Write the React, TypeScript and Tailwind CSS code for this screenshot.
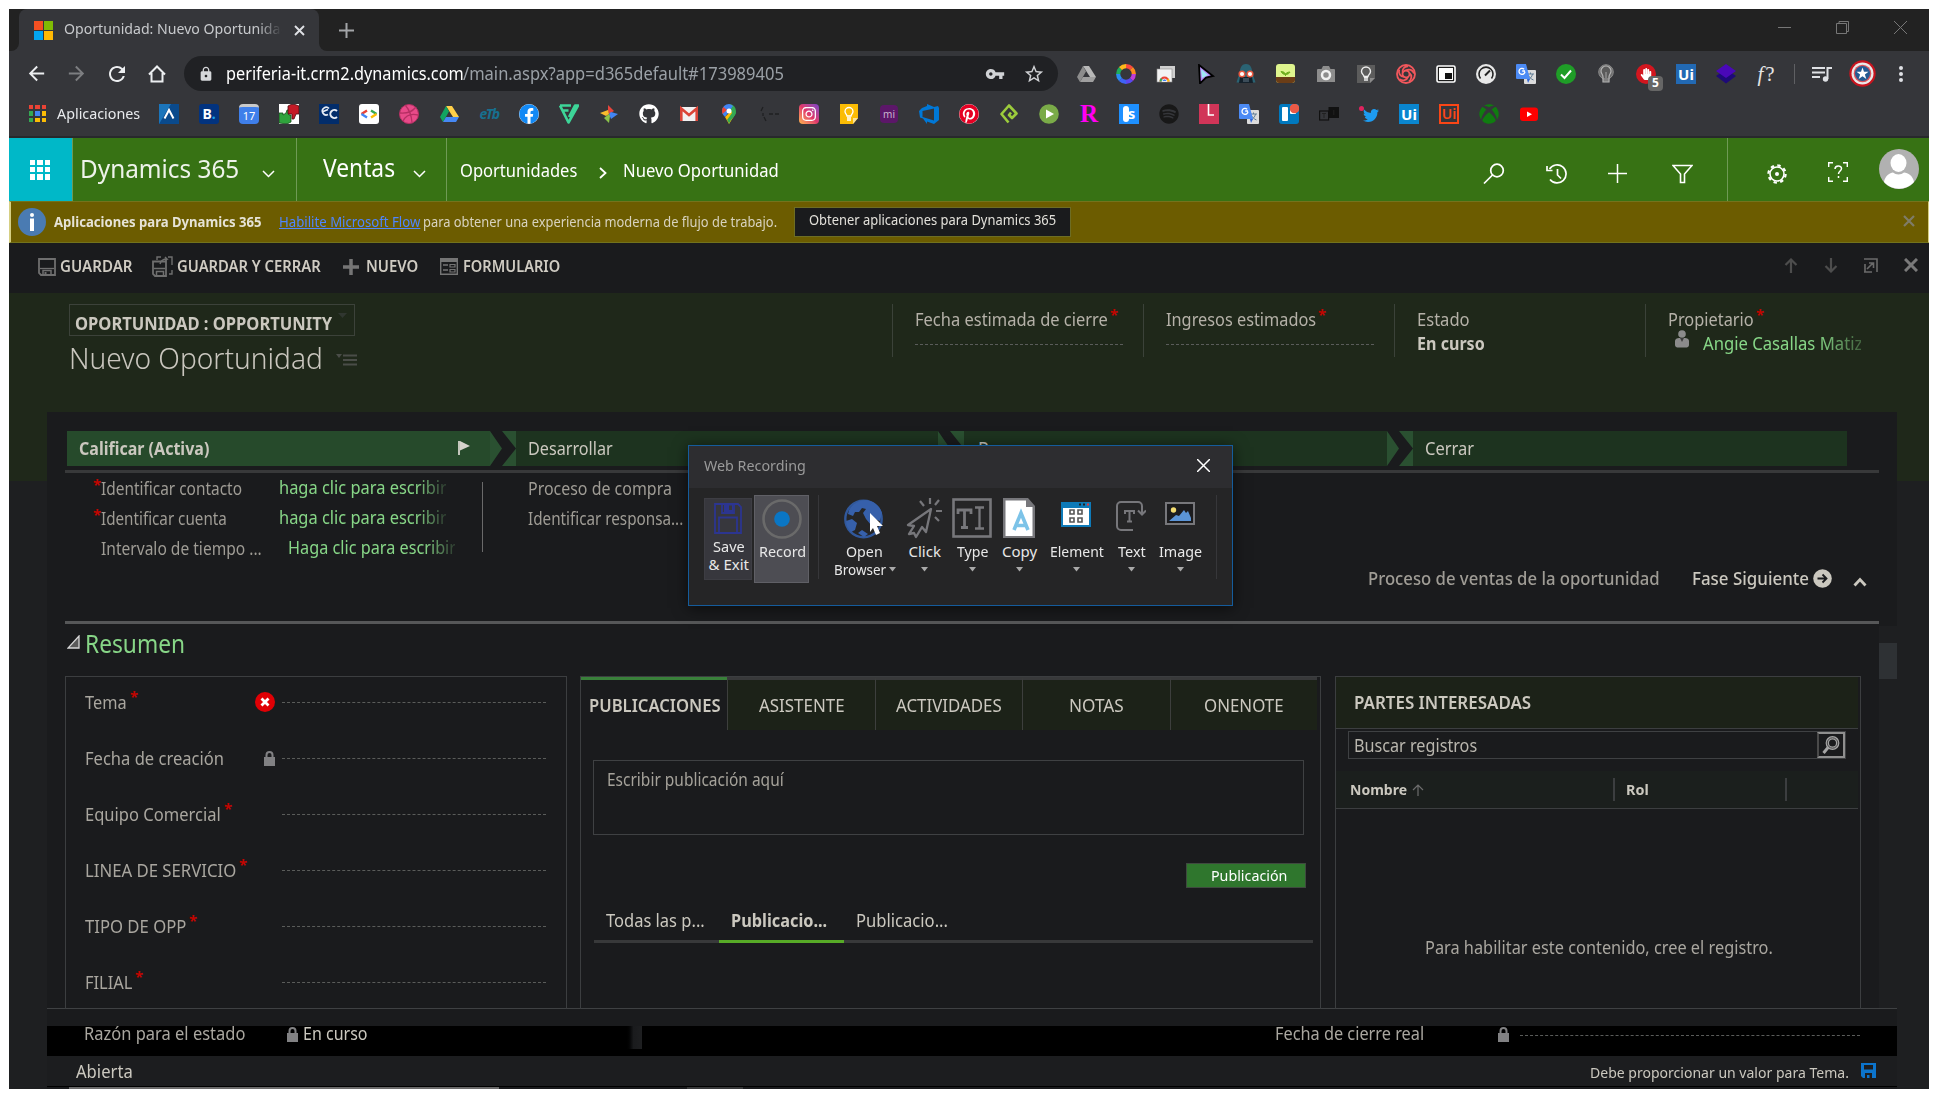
import React, { useLayoutEffect, useRef, useState } from "react";
import {
  FaFacebook,
  FaGithub,
  FaInstagram,
  FaPinterest,
  FaSpotify,
  FaTwitter,
  FaXbox,
  FaHandPaper,
} from "react-icons/fa";
import { MdVpnKey, MdStarBorder, MdLock, MdArrowBack, MdArrowForward, MdRefresh } from "react-icons/md";

/* A single line of text fitted to a fixed column width. */
function T({ w, c = "", children }: { w: number; c?: string; children: React.ReactNode }) {
  const ref = useRef<HTMLSpanElement>(null);
  const [scale, setScale] = useState(1);
  useLayoutEffect(() => {
    if (ref.current) setScale((w + 1) / ref.current.offsetWidth);
  }, [w]);
  return (
    <span className={`block shrink-0 ${c}`} style={{ width: w }}>
      <span
        ref={ref}
        className="inline-block origin-left whitespace-nowrap"
        style={{ transform: `scaleX(${scale})` }}
      >
        {children}
      </span>
    </span>
  );
}

type SvgProps = { w?: number; h?: number; vb?: string; c?: string; children: React.ReactNode };
function Svg({ w = 20, h = 20, vb = "0 0 20 20", c = "", children }: SvgProps) {
  return (
    <svg width={w} height={h} viewBox={vb} fill="none" className={`block shrink-0 ${c}`}>
      {children}
    </svg>
  );
}

/* ---------- browser icons ---------- */

const Translate = () => (
  <Svg>
    <rect x="8" y="6" width="12" height="14" rx="1" fill="#dcdcdc" />
    <path d="M11 10h7M14.500 8.500V10M16.500 10c-.5 3-2.500 5-5 6M12.500 11.500c1 2 2.500 3.500 5 4.500" stroke="#5f7d95" strokeWidth="1" />
    <path d="M1 0h9l4 15H1a1 1 0 0 1-1-1V1a1 1 0 0 1 1-1z" fill="#4c8bf5" />
    <path d="M11 15h3l-2 4z" fill="#3367d6" />
    <path d="M9 7H6.200M8.100 5.200A3 3 0 1 0 9 7.600" stroke="#fff" strokeWidth="1.300" />
  </Svg>
);

const Drive = ({ gray = false }: { gray?: boolean }) => (
  <Svg>
    <path d="M7 2h6l7 11h-6z" fill={gray ? "#b8b8b8" : "#ffcf48"} />
    <path d="M7 2l3 5.500L4 18 1 13z" fill={gray ? "#8c8c8c" : "#11a461"} />
    <path d="M7 13h13l-3 5H4z" fill={gray ? "#9f9f9f" : "#4688f4"} />
  </Svg>
);

const UiBox = ({ kind }: { kind: "a" | "b" | "c" }) => (
  <span
    className={
      kind === "a"
        ? "flex size-5 items-center justify-center bg-[#2269b3] text-[15px] font-bold leading-5 text-white"
        : kind === "b"
          ? "flex size-5 items-center justify-center bg-[#0a86cf] text-[15px] font-bold leading-5 text-white"
          : "flex size-5 items-center justify-center border-2 border-[#fa4616] text-[14px] font-semibold leading-4 text-[#fa4616]"
    }
  >
    Ui
  </span>
);

const extensions: React.ReactNode[] = [
  <Drive gray />,
  <Svg>
    {["#f9483f", "#ff8a1f", "#c13bd8", "#5b47f0", "#3f63f5", "#2a8cf0", "#1fae5c", "#ffb81c"].map((c, i) => (
      <path key={c} d="M10 2.200A7.800 7.800 0 0 1 15.600 4.500" stroke={c} strokeWidth="4.200" transform={`rotate(${i * 45} 10 10)`} />
    ))}
  </Svg>,
  <Svg>
    <rect x="4" y="2" width="15" height="12" fill="#cfcfcf" />
    <rect x="1" y="5" width="15" height="13" fill="#f3f3f3" stroke="#8a8a8a" strokeWidth=".6" />
    <path d="M3.500 17.500a5 5 0 0 1 10 0z" fill="#ea4335" />
    <path d="M3.500 17.500a5 5 0 0 1 1.500-3.500l3 3.500z" fill="#34a853" />
    <path d="M13.500 17.500a5 5 0 0 0-1-3l-3 3z" fill="#fbbc05" />
    <path d="M6 17.500a2.500 2.500 0 0 1 5 0z" fill="#4285f4" stroke="#fff" strokeWidth=".8" />
  </Svg>,
  <Svg>
    <path d="M3 1l14 11-7 1.500-6 6z" fill="#b78af5" stroke="#000" strokeWidth="1.800" />
    <path d="M5 5l7 6-6 3z" fill="#9fe8f5" />
  </Svg>,
  <Svg>
    <path d="M10 0c5 0 6 5 6.500 9l3 9.500H.500L3.500 9C4 5 5 0 10 0z" fill="#2a6373" />
    <path d="M4 13h12l1 6H3z" fill="#14212b" />
    <path d="M8 14v4M10 14v4M12 14v4" stroke="#7790a0" strokeWidth=".8" />
    <circle cx="6" cy="10" r="2.800" fill="#fff" stroke="#e8573f" strokeWidth="1.500" />
    <circle cx="14" cy="10" r="2.800" fill="#fff" stroke="#e8573f" strokeWidth="1.500" />
  </Svg>,
  <Svg>
    <rect y="0" width="19" height="19" rx="3" fill="#dff58e" />
    <path d="M0 13h19v3a3 3 0 0 1-3 3H3a3 3 0 0 1-3-3z" fill="#6b3d16" />
    <path d="M9.500 12V9.500M9.500 10.500C7.500 10.500 6 9.500 5 7.500 7.500 7.500 9 8.500 9.500 10.500zM9.500 10.500c.5-1.500 2-2.500 4.500-2.500-.5 1.500-2.500 2.500-4.500 2.500z" fill="#6fae1e" stroke="#6fae1e" />
  </Svg>,
  <Svg>
    <path d="M7 2h6l1.500 3H18a1 1 0 0 1 1 1v12H1V6a1 1 0 0 1 1-1h3.500z" fill="#8d8d8d" />
    <circle cx="10" cy="11" r="4" fill="#8d8d8d" stroke="#f1f1f1" strokeWidth="2.500" />
  </Svg>,
  <Svg>
    <path d="M1 1h18v13l-5 5H1z" fill="#5c5c5c" />
    <path d="M14 19v-5h5z" fill="#8b8b8b" />
    <path d="M8 14h4M8 16h4M8 12.500c0-1.500-2.500-2.500-2.500-5a4.500 4.500 0 0 1 9 0c0 2.500-2.500 3.500-2.500 5z" stroke="#eee" strokeWidth="1.400" />
  </Svg>,
  <Svg>
    <circle cx="10" cy="10" r="9" stroke="#f2575c" strokeWidth="1.800" />
    {[0, 72, 144, 216, 288].map((a) => (
      <path key={a} d="M10 6.500c3-2 7-.5 8 3" stroke="#f2575c" strokeWidth="1.800" transform={`rotate(${a} 10 10)`} />
    ))}
    <circle cx="10" cy="10" r="3.500" stroke="#f2575c" strokeWidth="1.800" />
  </Svg>,
  <Svg>
    <rect x="1" y="2" width="18" height="16" rx="1.500" fill="#1c1c1c" stroke="#fff" strokeWidth="1.600" />
    <rect x="3" y="4" width="14" height="12" fill="#fff" />
    <rect x="9" y="9" width="7" height="6" fill="#111" />
  </Svg>,
  <Svg>
    <circle cx="10" cy="10" r="10" fill="#e8e8e8" />
    <path d="M4.500 14.500a7 7 0 1 1 11 0" stroke="#222" strokeWidth="1.600" />
    <path d="M9 11.500l5-5" stroke="#222" strokeWidth="2" />
  </Svg>,
  <Translate />,
  <Svg>
    <circle cx="10" cy="10" r="10" fill="#1f9d27" />
    <path d="M5 10.500l3.500 3.500L15 6.500" stroke="#fff" strokeWidth="2" />
  </Svg>,
  <Svg>
    <circle cx="10" cy="8" r="7.300" fill="#6d6d6d" stroke="#8a8a8a" />
    <path d="M7 13c0-3-2-3-2-6a5 5 0 0 1 10 0c0 3-2 3-2 6v5H7z" fill="#5a5a5a" stroke="#b5b5b5" strokeWidth="1.200" />
    <path d="M10 14V8M7 15h6M7 17h6" stroke="#a5a5a5" />
  </Svg>,
  <span className="relative flex size-5 items-center justify-center rounded-full bg-[#d3161f]">
    <FaHandPaper className="size-[12px] text-white" />
    <span className="absolute left-[12px] top-[12px] flex h-[15px] w-[15px] items-center justify-center rounded-sm bg-[#666] text-[12px] font-bold leading-none text-white">
      5
    </span>
  </span>,
  <UiBox kind="a" />,
  <Svg>
    <path d="M10 5l10 7-10 7.500L0 12z" fill="#1e0a78" />
    <path d="M10 0l10 7-10 7L0 7z" fill="#4a08b8" />
  </Svg>,
  <span className="w-5 whitespace-nowrap text-center font-['Liberation_Serif',serif] text-[21px] italic leading-5 text-[#e4e4e4]">
    f<span className="ml-0.5 not-italic">?</span>
  </span>,
];

const bookmarks: React.ReactNode[] = [
  <Svg>
    <rect width="20" height="20" fill="#0a4a8c" />
    <path d="M0 0h12L0 20z" fill="#1b75bb" />
    <path d="M5.500 14.500L10 6l4.500 8.500" stroke="#fff" strokeWidth="2" />
  </Svg>,
  <span className="flex size-5 items-center justify-center rounded-[3px] bg-[#02337f] text-[14px] font-bold leading-none text-white">
    B<span className="text-[#1aa0ea]">.</span>
  </span>,
  <span className="flex size-5 flex-col items-center rounded-sm border-t-[3px] border-[#c9c9c9] bg-[#3f7fea] text-[11px] leading-[17px] text-white">
    17
  </span>,
  <Svg>
    <rect width="20" height="20" fill="#fff" />
    <path d="M0 9h4v2l3-2 1-3h2v5h2v7l-3 1.500H4L0 19z" fill="#2fa33c" stroke="#174d1d" strokeWidth=".8" />
    <path d="M9 2l3-1.500h4L20 2v8h-3l-2 5h-2v-5H9z" fill="#c41a26" stroke="#4d0d12" strokeWidth=".8" />
  </Svg>,
  <Svg>
    <rect width="20" height="20" fill="#022d6b" />
    <path d="M10 4.500a3.800 3.800 0 1 0-1 6M3 8l6-2.500" stroke="#e6ecf5" strokeWidth="1.700" />
    <path d="M18 7a4 4 0 1 0 0 6" stroke="#e6ecf5" strokeWidth="2" />
  </Svg>,
  <Svg>
    <rect width="20" height="20" rx="3" fill="#fff" />
    <path d="M8 6.500L2.500 10" stroke="#ea4335" strokeWidth="2.400" />
    <path d="M2.500 10L8 13.500" stroke="#4285f4" strokeWidth="2.400" />
    <path d="M12 6.500l5.500 3.500" stroke="#34a853" strokeWidth="2.400" />
    <path d="M17.500 10L12 13.500" stroke="#fbbc05" strokeWidth="2.400" />
  </Svg>,
  <Svg>
    <circle cx="10" cy="10" r="9.500" fill="#e84a89" stroke="#b52f63" />
    <path d="M6.500 1.500c4 4.500 6 10 6.500 17M1 9c6 .5 12-1 15.500-5.500M4 17c3-6 8.500-7.500 15-6" stroke="#b52f63" strokeWidth="1.300" />
  </Svg>,
  <Drive />,
  <span className="w-5 text-center text-[14px] font-bold italic leading-5 tracking-[-1.5px] text-[#17708f]">eTb</span>,
  <span className="flex size-5 items-center justify-center rounded-full bg-white">
    <FaFacebook className="size-5 text-[#1289f5]" />
  </span>,
  <Svg>
    <path d="M1 1.500h11M3.500 6.500h6M1 1.500l8.500 17L19 1.500h-3L10 13" stroke="#3dd598" strokeWidth="2.600" strokeLinejoin="round" />
  </Svg>,
  <Svg>
    <path d="M9 1l6 6-5 3-1-3z" fill="#e8453c" />
    <path d="M19 10l-7 5-2-5 2-2z" fill="#4285f4" />
    <path d="M10 19l-5-5 5-4 1 2z" fill="#8bc34a" />
    <path d="M1 9l8-3 1 4-3 2z" fill="#f9bb2d" />
  </Svg>,
  <FaGithub className="size-5 text-white" />,
  <Svg>
    <rect x="1" y="3" width="18" height="14" rx="1" fill="#f1f1f1" />
    <path d="M2.300 17V4.500L10 11l7.700-6.500V17" stroke="#db4437" strokeWidth="2.600" />
  </Svg>,
  <Svg>
    <path d="M10 0a7 7 0 0 1 7 7c0 5-5 7-7 13z" fill="#34a853" />
    <path d="M10 0a7 7 0 0 0-7 7c0 3 1.500 4.500 3 6l8-11A7 7 0 0 0 10 0z" fill="#4285f4" />
    <path d="M4.500 3L8 6l-4.500 4C2.500 7 3 4.500 4.500 3z" fill="#ea4335" />
    <path d="M6 13l6-6 3 5-5 8z" fill="#fbbc04" />
    <path d="M13 9l4-1c-.5 5-5 6-7 12-.5-2-1-3-2-4z" fill="#34a853" />
    <circle cx="10" cy="7" r="2.500" fill="#fff" />
  </Svg>,
  <Svg>
    <path d="M4 3l-2 4M4 9v3M5 13l2 4M10 10h4M16 10h4" stroke="#1f2022" strokeWidth="1.300" />
  </Svg>,
  <span className="flex size-5 items-center justify-center rounded bg-linear-to-tr from-[#fdb347] via-[#e0366b] to-[#7a3cc9]">
    <FaInstagram className="size-4 text-white" />
  </span>,
  <Svg>
    <path d="M1 0h18v14l-5 6H1z" fill="#fbbc04" />
    <path d="M14 20v-6h5z" fill="#fde293" />
    <path d="M8 14h4M8 16h4M8 12c0-1.500-2-2.500-2-4.500a4 4 0 0 1 8 0c0 2-2 3-2 4.500z" stroke="#fff" strokeWidth="1.300" />
  </Svg>,
  <span className="flex h-[18px] w-[18px] items-center justify-center rounded bg-[#5c1769] text-[10px] leading-none text-[#c9b4cf]">
    mi
  </span>,
  <Svg>
    <path d="M0 7l3-3 5-2V0l7 3 4-1 1 2v12l-5 4-7-2.500V20l-4-5.500-3-1zM3.500 13V7L15 4.500v12z" fill="#0078d7" fillRule="evenodd" />
  </Svg>,
  <span className="flex size-5 items-center justify-center rounded-full bg-white">
    <FaPinterest className="size-5 text-[#e60023]" />
  </span>,
  <Svg>
    <path d="M9.500 18.500L2.500 10 10 1.500l7.500 8-4.500 4.500-3-3 2-2.500" stroke="#9ccc3c" strokeWidth="2.600" strokeLinejoin="round" />
  </Svg>,
  <Svg>
    <circle cx="10" cy="10" r="9.800" fill="#7aab48" />
    <path d="M7 5.500l8 4.500-8 4.500z" fill="#fff" />
  </Svg>,
  <span className="w-5 text-center font-['Liberation_Serif',serif] text-[25px] font-bold leading-5 text-[#ff00f2]">R</span>,
  <span className="flex size-5 items-center justify-center bg-[#1e90ff] text-[15px] font-bold leading-none text-white">
    <span className="-mr-px h-4 w-[6px] rounded-full bg-white" />s
  </span>,
  <FaSpotify className="size-5 text-[#181818]" />,
  <Svg>
    <rect width="20" height="20" fill="#d13558" />
    <path d="M9.500 0v11H15" stroke="#fff" strokeWidth="1.600" />
  </Svg>,
  <Translate />,
  <Svg>
    <rect width="20" height="20" rx="3" fill="#0079bf" />
    <rect x="3" y="3" width="6" height="14" rx="1" fill="#fff" />
    <rect x="11" y="3" width="6" height="7" rx="1" fill="#fff" />
    <circle cx="15.500" cy="4.500" r="4.800" fill="#eb5a46" />
  </Svg>,
  <Svg>
    <rect x=".6" y="7" width="9" height="9" stroke="#111" strokeWidth="1.200" />
    <rect x="9.500" y="3" width="10.500" height="11" fill="#111" />
    <path d="M3 9.500h4M5 9.500V14M14.800 6v5" stroke="#222" />
  </Svg>,
  <span className="relative flex size-5 items-center justify-center">
    <FaTwitter className="mt-1 ml-1 size-[17px] text-[#1d9bf0]" />
    <span className="absolute left-0 top-0.5 size-[5px] rounded-full bg-[#e0245e]" />
  </span>,
  <UiBox kind="b" />,
  <UiBox kind="c" />,
  <FaXbox className="size-5 text-[#107c10]" />,
  <Svg>
    <rect x="1" y="3.500" width="18" height="13.500" rx="3" fill="#f00" />
    <path d="M8 7.500l5 2.700-5 2.700z" fill="#fff" />
  </Svg>,
];

function Browser() {
  return (
    <div>
      <div className="flex h-[42px] bg-[#222222]">
        <div className="flex h-[42px] w-[10px] items-end bg-[#35363a]">
          <div className="h-[42px] w-[10px] rounded-br-lg bg-[#222222]" />
        </div>
        <div className="flex h-[42px] w-[300px] items-center rounded-t-lg bg-[#35363a] pl-[15px]">
          <div className="grid size-[19px] grid-cols-2 gap-px">
            <div className="bg-[#f35022]" />
            <div className="bg-[#80bb03]" />
            <div className="bg-[#03a5f0]" />
            <div className="bg-[#ffb903]" />
          </div>
          <div className="-mt-[3px] ml-[11px] mr-[10px] w-[220px] overflow-hidden text-[15px] text-[#c8cacd] [mask-image:linear-gradient(to_right,black_88%,transparent_99%)]">
            <T w={224}>Oportunidad: Nuevo Oportunidad</T>
          </div>
          <Svg w={11} h={11} vb="0 0 11 11">
            <path d="M1 1l9 9M10 1L1 10" stroke="#dfe1e5" strokeWidth="1.900" />
          </Svg>
        </div>
        <div className="w-[10px] bg-[#35363a]">
          <div className="h-full rounded-bl-lg bg-[#222222]" />
        </div>
        <div className="ml-[10px] flex flex-1 items-center">
          <Svg w={15} h={15} vb="0 0 15 15">
            <path d="M7.500 0v15M0 7.500h15" stroke="#a3a5a8" strokeWidth="2" />
          </Svg>
        </div>
        <div className="flex items-center gap-[45px] pr-[22px] pb-1.5">
          <Svg w={13} h={13} vb="0 0 13 13">
            <path d="M0 6.500h13" stroke="#777" />
          </Svg>
          <Svg w={13} h={13} vb="0 0 13 13">
            <path d="M.500 2.500h10v10H.500zM3 2V.500h9.500v10H11" stroke="#777" />
          </Svg>
          <Svg w={13} h={13} vb="0 0 13 13">
            <path d="M0 0l13 13M13 0L0 13" stroke="#777" />
          </Svg>
        </div>
      </div>

      <div className="flex h-[45px] items-center bg-[#35363a]">
        <MdArrowBack className="ml-[16px] size-[23px] shrink-0 text-[#eceef0]" />
        <MdArrowForward className="ml-[17px] size-[23px] shrink-0 text-[#7d7e81]" />
        <MdRefresh className="ml-[17px] size-[24px] shrink-0 text-[#eceef0]" />
        <Svg w={18} h={18} vb="0 0 18 18" c="ml-[19px]">
          <path d="M1 9.500L9 1.500l8 8M3.500 8v8.500h11V8" stroke="#eceef0" strokeWidth="2" />
        </Svg>
        <div className="ml-[18px] flex h-[35px] w-[874px] shrink-0 items-center rounded-full bg-[#202124] text-[17.5px]">
          <MdLock className="ml-[14px] size-[16px] text-[#d5d7da]" />
          <div className="ml-[12px] flex">
            <T w={237} c="text-white">periferia-it.crm2.dynamics.com</T>
            <T w={320} c="text-[#9aa0a6]">/main.aspx?app=d365default#173989405</T>
          </div>
          <MdVpnKey className="ml-[202px] size-[20px] text-[#d0d2d5]" />
          <MdStarBorder className="ml-[18px] size-[22px] text-[#d0d2d5]" />
        </div>
        <div className="ml-[18px] flex gap-5">
          {extensions.map((icon, i) => (
            <div key={i} className="flex size-5 items-center justify-center">
              {icon}
            </div>
          ))}
        </div>
        <div className="ml-[18px] h-5 w-px bg-[#5f6063]" />
        <Svg c="ml-[17px]">
          <path d="M0 4h13M0 8.500h13M0 13h8" stroke="#dfe1e5" strokeWidth="1.900" />
          <path d="M15.500 15V4H20" stroke="#dfe1e5" strokeWidth="2" />
          <circle cx="13.500" cy="15" r="2.700" fill="#dfe1e5" />
        </Svg>
        <Svg w={27} h={27} vb="0 0 27 27" c="ml-[17px]">
          <circle cx="13.500" cy="13.500" r="13.200" fill="#c8141e" />
          <circle cx="13.500" cy="13.500" r="11" fill="#e9e9e9" />
          <circle cx="13.500" cy="13.500" r="8.800" fill="#d9555c" />
          <circle cx="13.500" cy="13.500" r="7.500" fill="#235a92" />
          <path d="M13.500 7.500l1.500 4.300h4.500l-3.600 2.700 1.400 4.400-3.800-2.700-3.800 2.700 1.400-4.400-3.600-2.700h4.500z" fill="#fff" />
        </Svg>
        <Svg w={6} h={18} vb="0 0 6 18" c="ml-[22px]">
          <circle cx="3" cy="3" r="2" fill="#dfe1e5" />
          <circle cx="3" cy="9" r="2" fill="#dfe1e5" />
          <circle cx="3" cy="15" r="2" fill="#dfe1e5" />
        </Svg>
      </div>

      <div className="flex h-[42px] items-center border-b-2 border-[#28292c] bg-[#35363a] pb-[5px]">
        <div className="ml-[20px] grid size-[17px] grid-cols-3 gap-[2px]">
          {["bg-[#ea4335]", "bg-[#ea4335]", "bg-[#ea4335]", "bg-[#34a853]", "bg-[#4285f4]", "bg-[#fbbc05]", "bg-[#34a853]", "bg-[#fbbc05]", "bg-[#fbbc05]"].map((c, i) => (
            <div key={i} className={c} />
          ))}
        </div>
        <T w={82} c="ml-[11px] text-[15px] text-[#e8eaed]">Aplicaciones</T>
        <div className="ml-[20px] flex gap-5">
          {bookmarks.map((icon, i) => (
            <div key={i} className="flex size-5 items-center justify-center">
              {icon}
            </div>
          ))}
        </div>
      </div>
    </div>
  );
}

/* ---------- Dynamics header ---------- */

const Chevron = ({ c = "" }: { c?: string }) => (
  <Svg w={13} h={8} vb="0 0 13 8" c={c}>
    <path d="M1 1l5.500 5.500L12 1" stroke="#fff" strokeWidth="1.500" />
  </Svg>
);

function NavBar() {
  return (
    <div className="flex h-[63px] bg-[#377214] text-white">
      <div className="flex w-[64px] items-center border-r border-[#6f9a55] bg-[#00b8c8] pl-[21px]">
        <div className="grid size-5 grid-cols-3 gap-[2px]">
          {Array.from({ length: 9 }, (_, i) => (
            <div key={i} className="bg-white" />
          ))}
        </div>
      </div>
      <div className="flex w-[224px] items-center border-r border-[#6f9a55]">
        <T w={158} c="ml-[7px] -mt-[3px] text-[26px] text-[#eef3ea]">Dynamics 365</T>
        <Chevron c="ml-[24px] mt-[8px]" />
      </div>
      <div className="flex w-[150px] items-center border-r border-[#6f9a55]">
        <T w={71} c="ml-[26px] -mt-[3px] text-[25px]">Ventas</T>
        <Chevron c="ml-[19px] mt-[8px]" />
      </div>
      <div className="flex flex-1 items-center pt-px text-[17.5px]">
        <T w={116} c="ml-[13px]">Oportunidades</T>
        <Svg w={8} h={12} vb="0 0 8 12" c="ml-[23px] mt-1.5">
          <path d="M1 1l5.500 5L1 11" stroke="#fff" strokeWidth="1.800" />
        </Svg>
        <T w={155} c="ml-[16px]">Nuevo Oportunidad</T>
      </div>
      <div className="flex items-center gap-[41px] pr-[34px] pt-[8px]">
        <Svg w={22} h={22} vb="0 0 22 22">
          <circle cx="14" cy="7.500" r="6.300" stroke="#fff" strokeWidth="1.700" />
          <path d="M9.500 12L1 20.500" stroke="#fff" strokeWidth="1.700" />
        </Svg>
        <Svg w={21} h={20} vb="0 0 21 20">
          <path d="M3.500 5A9 9 0 1 1 4 15.500M1 2v4.500h5.500M11.500 5v6l3.500 3.500" stroke="#fff" strokeWidth="1.700" />
        </Svg>
        <Svg w={19} h={19} vb="0 0 19 19">
          <path d="M9.500 0v19M0 9.500h19" stroke="#fff" strokeWidth="1.500" />
        </Svg>
        <Svg w={21} h={20} vb="0 0 21 20" c="ml-[4px] mt-px">
          <path d="M1 1.500h19L12.500 10v8.500h-4V10z" stroke="#fff" strokeWidth="1.600" />
        </Svg>
      </div>
      <div className="flex w-[202px] items-center border-l border-[#6f9a55]">
        <Svg w={20} h={20} vb="0 0 20 20" c="ml-[39px] mt-[9px]">
          <circle cx="10" cy="10" r="8.600" stroke="#fff" strokeWidth="2.200" strokeDasharray="3.380 3.380" />
          <circle cx="10" cy="10" r="7" stroke="#fff" strokeWidth="1.600" />
          <circle cx="10" cy="10" r="2" fill="#fff" />
        </Svg>
        <Svg w={20} h={20} vb="0 0 20 20" c="ml-[41px] mt-[4px]">
          <path d="M.700 5V.700H5M15 .700h4.300V5M19.300 15v4.300H15M5 19.300H.700V15" stroke="#fff" strokeWidth="1.400" />
          <path d="M7 7c0-4 6.500-4 6.500-.500 0 2.500-3 2.500-3 5.500M10.500 14v2" stroke="#fff" strokeWidth="1.500" />
        </Svg>
        <Svg w={40} h={40} vb="0 0 40 40" c="-mt-px ml-[31px]">
          <circle cx="20" cy="20" r="20" fill="#b1b1b1" />
          <ellipse cx="19.500" cy="14" rx="8" ry="9" fill="#fff" />
          <path d="M5 33c1-6 6-9.500 9-9.500 3 2.500 8 2.500 11 0 4 0 9 3.500 10 9.500a20 20 0 0 1-30 0z" fill="#fff" />
        </Svg>
      </div>
    </div>
  );
}

function Notification() {
  return (
    <div className="flex h-[42px] items-center border-y border-l-2 border-r border-y-[#73731c] border-l-[#d6cf83] border-r-[#d6cf83] bg-[#6c5c00] text-[14.5px]">
      <div className="ml-[7px] flex size-7 items-center justify-center rounded-full bg-[#4a7bb2]">
        <Svg w={6} h={18} vb="0 0 6 18">
          <circle cx="3" cy="2" r="2" fill="#fff" />
          <rect x="1" y="5.500" width="4" height="12.500" fill="#fff" />
        </Svg>
      </div>
      <T w={206} c="ml-[8px] font-bold text-[#e6e3d6]">Aplicaciones para Dynamics 365</T>
      <T w={140} c="ml-[19px] text-[#4f86ff] [&>span]:underline">Habilite Microsoft Flow</T>
      <T w={353} c="ml-[4px] text-[#d8d3bf]">para obtener una experiencia moderna de flujo de trabajo.</T>
      <div className="ml-[18px] flex h-[30px] w-[277px] items-center border border-[#6d6d24] bg-[#1a1b1d] pb-[5px] text-[#e2e0da]">
        <T w={246} c="ml-[14px]">Obtener aplicaciones para Dynamics 365</T>
      </div>
      <Svg w={12} h={12} vb="0 0 12 12" c="-mt-0.5 ml-auto mr-[13px]">
        <path d="M1 1l10 10M11 1L1 11" stroke="#7f7c68" strokeWidth="2.200" />
      </Svg>
    </div>
  );
}

const Floppy = () => (
  <Svg w={18} h={18} vb="0 0 18 18">
    <path d="M1 1h16v16H3L1 15z" stroke="#6f6f6f" strokeWidth="1.800" />
    <path d="M2 10.500h14" stroke="#6f6f6f" strokeWidth="1.300" />
    <path d="M5 17v-4.500h8V17" stroke="#6f6f6f" strokeWidth="1.500" />
    <path d="M6.500 14h2v3h-2z" fill="#6f6f6f" />
  </Svg>
);

const SaveSolid = () => (
  <Svg w={15} h={15} vb="0 0 15 15">
    <path d="M0 0h15v15H2l-2-2z" fill="#0c74cc" />
    <path d="M3 2h9v4.500H3z" fill="#1c1d1f" />
    <path d="M4 10h7v5H8.500v-3H6v3H4z" fill="#1c1d1f" />
  </Svg>
);

function CommandBar() {
  return (
    <div className="flex h-[50px] items-center bg-[#1a1b1d] pb-[2px] text-[15.5px] font-semibold text-[#cfcbc2]">
      <div className="ml-[29px]">
        <Floppy />
      </div>
      <T w={71} c="ml-[4px]">GUARDAR</T>
      <Svg w={21} h={21} vb="0 0 21 21" c="ml-[21px] -mt-[2px]">
        <path d="M1 5.500h13V20H3l-2-2z" stroke="#6f6f6f" strokeWidth="1.800" />
        <path d="M4.500 20v-4.500h7V20" stroke="#6f6f6f" strokeWidth="1.500" />
        <path d="M2 12.500h11M17 18h3V14M20 9V1h-4M9 1H5v3M8 8c1-4 4-5 7-5l-2-2M15 3l-2 3" stroke="#6f6f6f" strokeWidth="1.400" />
      </Svg>
      <T w={143} c="ml-[4px]">GUARDAR Y CERRAR</T>
      <Svg w={16} h={16} vb="0 0 16 16" c="ml-[23px]">
        <path d="M8 0v16M0 8h16" stroke="#757575" strokeWidth="3.500" />
      </Svg>
      <T w={51} c="ml-[7px]">NUEVO</T>
      <Svg w={18} h={17} vb="0 0 18 17" c="ml-[23px] -mt-px">
        <path d="M.700 .700h16.600v15.600H.700z" stroke="#757575" strokeWidth="1.400" />
        <path d="M0 0h18v4H0z" fill="#757575" />
        <path d="M3 7h5M3 12h5" stroke="#757575" strokeWidth="1.500" />
        <path d="M10 6.500h5v2.500h-5zM10 11.500h5V14h-5z" stroke="#757575" strokeWidth="1.200" />
      </Svg>
      <T w={96} c="ml-[5px]">FORMULARIO</T>
      <div className="ml-auto flex items-center gap-[26px] pr-[11px] pb-1">
        <Svg w={14} h={15} vb="0 0 14 15">
          <path d="M7 15V2M1.500 7L7 1.500 12.500 7" stroke="#4d4d4d" strokeWidth="2.200" />
        </Svg>
        <Svg w={14} h={15} vb="0 0 14 15">
          <path d="M7 0v13M1.500 8L7 13.500 12.500 8" stroke="#4d4d4d" strokeWidth="2.200" />
        </Svg>
        <Svg w={14} h={15} vb="0 0 14 15">
          <path d="M0 1h13v13M0 14h8M1 6v8M3 11l6-6M5 5h4.500v5" stroke="#6b6b6b" strokeWidth="1.600" />
        </Svg>
        <Svg w={14} h={14} vb="0 0 14 14">
          <path d="M1 1l12 12M13 1L1 13" stroke="#7a7a7a" strokeWidth="3" />
        </Svg>
      </div>
    </div>
  );
}

const Star = ({ c = "" }: { c?: string }) => (
  <span className={`block text-[15px] font-bold leading-none text-[#c00500] ${c}`}>*</span>
);

function HeaderField({ label, w, required, children }: { label: string; w: number; required?: boolean; children?: React.ReactNode }) {
  return (
    <div className="h-[53px] w-[251px] border-l border-[#3b4239] pl-[22px] pt-[3px]">
      <div className="flex h-6 items-center">
        <T w={w}>{label}</T>
        {required && <Star c="-mt-[10px] ml-[3px]" />}
      </div>
      {children}
    </div>
  );
}

const Dotted = ({ c = "" }: { c?: string }) => <div className={`h-0 border-t border-dashed border-[#5a5c5a] ${c}`} />;

function RecordHeader() {
  return (
    <div className="flex h-[119px] bg-[#1f281a] text-[17.5px] text-[#b5b1a8]">
      <div className="ml-[60px] w-[823px] pt-[11px]">
        <div className="flex h-[32px] w-[286px] items-center border border-[#3c423a] pl-[5px] pt-[6px] font-bold text-[#cbc8bf]">
          <T w={256}>OPORTUNIDAD : OPPORTUNITY</T>
          <Svg w={9} h={5} vb="0 0 9 5" c="-mt-4 ml-[7px]">
            <path d="M0 0h9L4.500 5z" fill="#303630" />
          </Svg>
        </div>
        <div className="mt-[4px] flex h-[36px] items-center">
          <T w={253} c="text-[30px] font-light leading-9 text-[#c9c6be]">Nuevo Oportunidad</T>
          <Svg w={21} h={12} vb="0 0 21 12" c="ml-[14px] mt-1">
            <path d="M0 0h6L3 4z" fill="#4a4d48" />
            <path d="M7 1.500h14M7 6h14M7 10.500h14" stroke="#4a4d48" strokeWidth="2" />
          </Svg>
        </div>
      </div>
      <div className="flex pt-[11px]">
        <HeaderField label="Fecha estimada de cierre" w={192} required>
          <Dotted c="mt-[13px] w-[208px]" />
        </HeaderField>
        <HeaderField label="Ingresos estimados" w={149} required>
          <Dotted c="mt-[13px] w-[208px]" />
        </HeaderField>
        <HeaderField label="Estado" w={52}>
          <T w={67} c="h-6 font-bold leading-6 text-[#cbc8bf]">En curso</T>
        </HeaderField>
        <HeaderField label="Propietario" w={85} required>
          <div className="flex h-6 items-center pl-[7px]">
            <Svg w={14} h={18} vb="0 0 14 18" c="-mt-2">
              <circle cx="7" cy="4" r="3.800" fill="#8b8b8b" />
              <path d="M0 11c0-2 2-3 4-3h6c2 0 4 1 4 3v4c0 2-2 2.500-3 2.500H3c-1 0-3-.5-3-2.500z" fill="#8b8b8b" />
              <path d="M5 8l2 4 2-4z" fill="#3c3c3c" />
            </Svg>
            <T w={158} c="ml-[14px] text-[#87d687] [mask-image:linear-gradient(to_right,black_72%,rgba(0,0,0,.35))]">
              Angie Casallas Matiz
            </T>
          </div>
        </HeaderField>
      </div>
    </div>
  );
}

/* ---------- process stages ---------- */

const StageArrow = () => (
  <Svg w={26} h={35} vb="0 0 26 35">
    <path d="M0 0h26v35H0z" fill="#2a5031" />
    <path d="M0 0h12l14 17.500L12 35H0l12-17.500z" fill="#1a1b1d" />
  </Svg>
);

function Process() {
  return (
    <div className="h-[214px] pt-[19px] text-[17.5px] text-[#9f9c95]">
      <div className="ml-[20px] flex h-[35px] items-stretch text-[#cbc8bf]">
        <div className="flex w-[423px] items-center bg-[#264a2b] pb-px">
          <T w={129} c="ml-[12px] font-bold">Calificar (Activa)</T>
          <Svg w={12} h={14} vb="0 0 12 14" c="ml-[250px]">
            <path d="M1 0v14" stroke="#d6d4cc" strokeWidth="1.800" />
            <path d="M2 0l10 5-10 4.500z" fill="#d6d4cc" />
          </Svg>
        </div>
        <StageArrow />
        <div className="flex w-[422px] items-center bg-[#1d331f] pb-px">
          <T w={84} c="ml-[12px]">Desarrollar</T>
        </div>
        <StageArrow />
        <div className="flex w-[423px] items-center bg-[#1d331f] pb-px">
          <T w={76} c="ml-[14px]">Proponer</T>
        </div>
        <StageArrow />
        <div className="flex w-[434px] items-center bg-[#1d331f] pb-px">
          <T w={48} c="ml-[12px]">Cerrar</T>
        </div>
      </div>
      <div className="ml-[18px] mt-[4px] h-[3px] w-[1814px] bg-[#38393a]" />
      <div className="flex h-[90px]">
        <div className="w-[388px]">
          {[
            { l: "Identificar contacto", w: 140, v: "haga clic para escribir", req: true, ml: "ml-[38px]" },
            { l: "Identificar cuenta", w: 125, v: "haga clic para escribir", req: true, ml: "ml-[53px]" },
            { l: "Intervalo de tiempo ...", w: 160, v: "Haga clic para escribir", req: false, ml: "ml-[27px]" },
          ].map((r) => (
            <div key={r.l} className="flex h-[30px] items-center">
              <div className="w-[54px] shrink-0 pl-[46px]">{r.req && <Star c="-mt-2 text-[14px]" />}</div>
              <T w={r.w}>{r.l}</T>
              <T w={167} c={`${r.ml} -mt-[2px] text-[#87d687] [mask-image:linear-gradient(to_right,black_82%,rgba(0,0,0,.2)_99%)]`}>
                {r.v}
              </T>
            </div>
          ))}
        </div>
        <div className="ml-[47px] mt-[9px] h-[70px] w-px bg-[#6a6a6a]" />
        <div className="ml-[45px]">
          <div className="flex h-[30px] items-center">
            <T w={143}>Proceso de compra</T>
          </div>
          <div className="flex h-[30px] items-center">
            <T w={154}>Identificar responsa...</T>
          </div>
        </div>
      </div>
      <div className="flex h-[30px] items-center pt-px">
        <T w={291} c="ml-[1321px] font-medium">Proceso de ventas de la oportunidad</T>
        <T w={116} c="ml-[33px] font-medium text-[#cbc8bf]">Fase Siguiente</T>
        <Svg w={19} h={19} vb="0 0 19 19" c="ml-[5px]">
          <circle cx="9.500" cy="9.500" r="9.300" fill="#cbc8bf" />
          <path d="M4.500 9.500h9M9.500 5.500l4 4-4 4" stroke="#1a1b1d" strokeWidth="1.800" />
        </Svg>
        <Svg w={14} h={10} vb="0 0 14 10" c="ml-[21px] mt-[6px]">
          <path d="M1.500 8.500L7 2.500l5.500 6" stroke="#cbc8bf" strokeWidth="2.800" />
        </Svg>
      </div>
      <div className="ml-[18px] mt-[28px] h-[3px] w-[1814px] bg-[#565758]" />
    </div>
  );
}

/* ---------- record cards ---------- */

const Lock = () => (
  <Svg w={11} h={15} vb="0 0 11 15">
    <path d="M2.500 7V4a3 3 0 0 1 6 0v3" stroke="#818183" strokeWidth="2" />
    <rect y="6" width="11" height="9" fill="#818183" />
  </Svg>
);

function SummaryCard() {
  const rows = [
    { l: "Tema", w: 41, req: true, icon: "error" },
    { l: "Fecha de creación", w: 138, req: false, icon: "lock" },
    { l: "Equipo Comercial", w: 135, req: true, icon: "" },
    { l: "LINEA DE SERVICIO", w: 150, req: true, icon: "" },
    { l: "TIPO DE OPP", w: 100, req: true, icon: "" },
    { l: "FILIAL", w: 46, req: true, icon: "" },
  ];
  return (
    <div className="w-[502px] border border-b-0 border-[#3c3e40] pl-[19px] text-[17.5px] text-[#a9a69f]">
      {rows.map((r) => (
        <div key={r.l} className="flex h-14 items-center pb-[6px]">
          <div className="flex w-[172px] items-center">
            <T w={r.w}>{r.l}</T>
            {r.req && <Star c="-mt-[11px] ml-[4px]" />}
          </div>
          <div className="flex w-[25px] justify-end pr-[7px]">
            {r.icon === "error" && (
              <Svg>
                <circle cx="10" cy="10" r="10" fill="#e00005" />
                <path d="M6.500 6.500l7 7M13.500 6.500l-7 7" stroke="#fff" strokeWidth="2.800" />
              </Svg>
            )}
            {r.icon === "lock" && <Lock />}
          </div>
          <Dotted c="w-[264px]" />
        </div>
      ))}
    </div>
  );
}

function SocialCard() {
  const tabs = [
    { l: "ASISTENTE", w: 85 },
    { l: "ACTIVIDADES", w: 105 },
    { l: "NOTAS", w: 54 },
    { l: "ONENOTE", w: 79 },
  ];
  return (
    <div className="ml-[13px] w-[741px] border border-b-0 border-[#3c3e40] text-[17.5px] text-[#cbc8bf]">
      <div className="flex h-[53px]">
        <div className="flex w-[146px] items-center justify-center border-t-[3px] border-[#39803a] font-semibold">
          <T w={131}>PUBLICACIONES</T>
        </div>
        {tabs.map((t) => (
          <div key={t.l} className="flex w-[147.500px] items-center justify-center border-l border-t-[3px] border-l-[#3d3f3d] border-t-[#38393a] bg-[#1c2218]">
            <T w={t.w}>{t.l}</T>
          </div>
        ))}
      </div>
      <div className="ml-[12px] mt-[30px] h-[75px] w-[711px] border border-[#3f4143] pl-[13px] pt-[5px] text-[#a5a29a]">
        <T w={176}>Escribir publicación aquí</T>
      </div>
      <div className="ml-[605px] mt-[28px] flex h-[25px] w-[120px] items-center border border-[#3f4a3f] bg-[#2f762d] pl-[24px] text-[15px] text-white">
        <T w={75}>Publicación</T>
      </div>
      <div className="ml-[13px] mt-[18px] flex h-[37px] w-[719px]">
        <div className="flex w-[125px] items-center border-b-[3px] border-[#38393a] pb-[5px] pl-[12px]">
          <T w={98}>Todas las p...</T>
        </div>
        <div className="flex w-[125px] items-center border-b-[3px] border-[#57ab27] pb-[5px] pl-[12px] font-bold">
          <T w={95}>Publicacio...</T>
        </div>
        <div className="flex flex-1 items-center border-b-[3px] border-[#38393a] pb-[5px] pl-[12px]">
          <T w={91}>Publicacio...</T>
        </div>
      </div>
    </div>
  );
}

function StakeholdersCard() {
  return (
    <div className="ml-[14px] w-[526px] border border-b-0 border-[#3c3e40] text-[17.5px] text-[#a9a69f]">
      <div className="flex h-[52px] w-[522px] items-center border-b border-[#3c3e40] bg-[#1c2218] pl-[18px] font-semibold text-[#cbc8bf]">
        <T w={176}>PARTES INTERESADAS</T>
      </div>
      <div className="ml-[12px] mt-[2px] flex h-[28px] w-[498px] items-center border border-[#3f4143] text-[#b9b6ae]">
        <T w={122} c="ml-[5px]">Buscar registros</T>
        <div className="ml-auto flex h-[26px] w-[28px] items-center justify-center border-2 border-[#8f8f8f] border-l-[#4a4a4a]">
          <Svg w={18} h={18} vb="0 0 18 18">
            <circle cx="10.500" cy="7" r="5.200" stroke="#a5a5a5" strokeWidth="3.400" />
            <path d="M6.500 11L1.500 17" stroke="#a5a5a5" strokeWidth="3" />
            <circle cx="10.500" cy="7" r="5.200" stroke="#3a3a3a" strokeWidth=".9" />
          </Svg>
        </div>
      </div>
      <div className="mt-[12px] flex h-[38px] w-[522px] items-center border-b border-[#3c3e40] bg-[#1b1f1d] text-[15px] font-bold text-[#cbc8bf]">
        <T w={56} c="ml-[14px]">Nombre</T>
        <Svg w={12} h={12} vb="0 0 12 12" c="ml-[6px]">
          <path d="M6 12V1M1 6l5-5 5 5" stroke="#6d6d6d" strokeWidth="1.200" />
        </Svg>
        <div className="ml-[189px] h-[23px] w-[2px] bg-[#3c3e40]" />
        <T w={22} c="ml-[11px]">Rol</T>
        <div className="ml-[137px] h-[23px] w-[2px] bg-[#3c3e40]" />
      </div>
      <div className="ml-[89px] mt-[125px]">
        <T w={347}>Para habilitar este contenido, cree el registro.</T>
      </div>
    </div>
  );
}

/* ---------- floating recorder ---------- */

const Caret = ({ c = "" }: { c?: string }) => (
  <Svg w={7} h={5} vb="0 0 7 5" c={c}>
    <path d="M0 0h7L3.500 4.500z" fill="#a9a9a9" />
  </Svg>
);

function Tool({ cls, label, w, icon }: { cls: string; label: string; w: number; icon: React.ReactNode }) {
  return (
    <div className={`flex shrink-0 flex-col items-center pt-px ${cls}`}>
      <div className="flex h-[44px] items-center">{icon}</div>
      <T w={w} c="mt-px leading-[20px]">{label}</T>
      <Caret c="mt-[6px]" />
    </div>
  );
}

function Recorder() {
  return (
    <div className="absolute left-[688px] top-[445px] h-[161px] w-[545px] border border-[#155c9c] bg-[#252526] text-[15px] text-[#e8e8e8] shadow-[0_2px_14px_rgba(0,0,0,.6)]">
      <div className="flex h-[42px] items-center justify-between bg-[#2d2d30] pl-[15px] pr-[22px] pb-[4px] text-[#9a9a9a]">
        <T w={101}>Web Recording</T>
        <Svg w={13} h={13} vb="0 0 13 13">
          <path d="M0 0l13 13M13 0L0 13" stroke="#fff" strokeWidth="1.500" />
        </Svg>
      </div>
      <div className="flex pt-[7px]">
        <div className="ml-[15px] mt-[3px] flex h-[82px] w-[48px] flex-col items-center border border-[#3d3d43] bg-[#37373d] pt-[4px] leading-[18px]">
          <Svg w={28} h={31} vb="0 0 28 31">
            <path d="M1 1h23l3 3v26H1zM8 1v9h12V1M5 30V14.500h18V30" stroke="#2c3590" strokeWidth="1.800" />
            <path d="M10 1h9v8h-9z" fill="#2c3590" />
            <path d="M15 2.500h3V7h-3z" fill="#37373d" />
          </Svg>
          <T w={31} c="mt-[3px]">Save</T>
          <T w={39}>&amp; Exit</T>
        </div>
        <div className="ml-[2px] flex h-[88px] w-[55px] flex-col items-center border border-[#606066] bg-[#4d4d53] pt-[3px]">
          <Svg w={40} h={40} vb="0 0 40 40">
            <circle cx="20" cy="20" r="18.500" stroke="#6a6a6a" strokeWidth="2.600" />
            <circle cx="20" cy="20" r="7.800" fill="#0a76c4" />
          </Svg>
          <T w={46} c="mt-px">Record</T>
        </div>
        <div className="ml-[9px] h-[84px] w-px bg-[#37373a]" />
        <div className="flex w-[64px] shrink-0 flex-col pl-[15px]">
          <Svg w={40} h={44} vb="0 0 40 44" c="ml-[10px]">
            <circle cx="19.500" cy="24" r="18.200" stroke="#31589b" strokeWidth="2.400" fill="#252526" />
            <path d="M5 15C9 8 16 5 22 5c8 1 14 6 16 13l-2 8-6-2-3 6-5-6-3-6 3-4-4-1-3 4-4 0-2 4-5-2z" fill="#3660ab" />
            <path d="M2 26l6-2 5 4-2 7-4 2c-3-3-5-7-5-11zM14 38l4-3 6 4-4 3z" fill="#3660ab" />
            <path d="M26 18l13 13h-6l3 7-4 2-3-7-3 4z" fill="#fff" />
          </Svg>
          <T w={36} c="ml-[12px] mt-[2px] leading-[20px]">Open</T>
          <div className="flex items-center leading-[17px]">
            <T w={51}>Browser</T>
            <Caret c="ml-[4px]" />
          </div>
        </div>
        <Tool
          cls="ml-[24px] w-[34px]"
          label="Click"
          w={31}
          icon={
            <Svg w={36} h={42} vb="0 0 36 42">
              <path d="M25 12L2 28l6 1-5 8 5-1 2 4 6-10 4 5z" stroke="#77777b" strokeWidth="2.300" strokeLinejoin="round" />
              <path d="M24 1v6M14 4l4 5M33 3l-4 5M30 14h6M29 20l4 4" stroke="#77777b" strokeWidth="2.200" />
            </Svg>
          }
        />
        <Tool
          cls="ml-[11px] w-[40px]"
          label="Type"
          w={30}
          icon={
            <Svg w={40} h={40} vb="0 0 40 40">
              <rect x="1.500" y="1.500" width="37" height="37" stroke="#77777b" strokeWidth="2.600" />
              <path d="M6 16v-4h13v4M12.500 12v17M9 29.500h7" stroke="#77777b" strokeWidth="2.800" />
              <path d="M23 9.500h9M27.500 10v20M23 30.500h9" stroke="#77777b" strokeWidth="2.300" />
            </Svg>
          }
        />
        <Tool
          cls="ml-[8px] w-[38px]"
          label="Copy"
          w={34}
          icon={
            <Svg w={32} h={40} vb="0 0 32 40">
              <path d="M0 0h25l7 8v32H0z" fill="#77777b" />
              <path d="M2.500 2.500H23V9h6.500v29H2.500z" fill="#fff" />
              <path d="M11 32l7-17 7 17M13.500 27.500h9" stroke="#7cc3e8" strokeWidth="3.600" />
            </Svg>
          }
        />
        <Tool
          cls="ml-[11px] w-[54px]"
          label="Element"
          w={53}
          icon={
            <Svg w={30} h={25} vb="0 0 30 25" c="-mt-[7px]">
              <rect width="30" height="25" fill="#0e7ab8" />
              <rect x="2" y="6" width="26" height="17" fill="#fff" />
              <path d="M9 8h4v4H9zM17 8h4v4h-4zM9 16h4v4H9zM17 16h4v4h-4z" stroke="#555" strokeWidth="1.600" />
              <path d="M18 2.500h2M22 2.500h2" stroke="#222" strokeWidth="2" />
              <path d="M26 2.500h2" stroke="#e33" strokeWidth="2" />
            </Svg>
          }
        />
        <Tool
          cls="ml-[13px] w-[30px]"
          label="Text"
          w={27}
          icon={
            <Svg w={30} h={31} vb="0 0 30 31" c="-mt-[3px]">
              <path d="M17 29H5a4 4 0 0 1-4-4V5a4 4 0 0 1 4-4h17a4 4 0 0 1 4 4v8" stroke="#77777b" strokeWidth="2" />
              <path d="M22 9.500l4 4 4-4" stroke="#77777b" strokeWidth="2" />
              <path d="M9 13v-3h9v3M13.500 10v10M11 20.500h5" stroke="#77777b" strokeWidth="2" />
            </Svg>
          }
        />
        <Tool
          cls="ml-[12px] w-[44px]"
          label="Image"
          w={42}
          icon={
            <Svg w={30} h={23} vb="0 0 30 23" c="-mt-[10px]">
              <rect x="1" y="1" width="28" height="21" fill="#1c1c1e" stroke="#77777b" strokeWidth="2" />
              <path d="M4 19l7-6 3 1 5-6 2 3 2-2 3 7v3z" fill="#5b94d6" />
              <circle cx="8.500" cy="8" r="2.700" fill="#f3dc72" />
            </Svg>
          }
        />
        <div className="ml-[14px] h-[84px] w-px bg-[#37373a]" />
      </div>
    </div>
  );
}

export default function App() {
  return (
    <div className="relative h-[1098px] w-[1938px] overflow-hidden bg-white p-[9px] font-['Noto_Sans','Open_Sans',sans-serif]">
      <div className="h-[1080px] w-[1920px] overflow-hidden bg-[#1e1f21]">
        <Browser />
        <NavBar />
        <Notification />
        <CommandBar />
        <RecordHeader />
        <div className="flex">
          <div className="w-[38px]">
            <div className="h-[69px] bg-[#1f281a]" />
          </div>
          <div className="w-[1850px] bg-[#1a1b1d]">
            <Process />
            <div className="flex h-[383px] border-b border-[#3f4143]">
              <div className="w-[1832px]">
                <div className="flex h-[50px] items-center pb-[14px] pl-[20px]">
                  <Svg w={13} h={14} vb="0 0 13 14" c="-mt-1">
                    <path d="M12 1v12H1z" fill="#5a5a5a" stroke="#d6d6d6" strokeWidth="1.300" />
                  </Svg>
                  <T w={99} c="ml-[5px] text-[25px] text-[#87d687]">Resumen</T>
                </div>
                <div className="flex h-[333px] pl-[18px]">
                  <SummaryCard />
                  <SocialCard />
                  <StakeholdersCard />
                </div>
              </div>
              <div className="w-[18px] bg-[#1e1f21] pt-[17px]">
                <div className="h-[36px] bg-[#2e3134]" />
              </div>
            </div>
            <div className="h-[17px]" />
            <div className="flex h-[30px] bg-black text-[17.5px] leading-[18px] text-[#a9a69f]">
              <T w={160} c="ml-[37px] -mt-[2px]">Razón para el estado</T>
              <div className="ml-[43px] pt-px">
                <Lock />
              </div>
              <T w={64} c="ml-[5px] -mt-[2px] text-[#cbc8bf]">En curso</T>
              <div className="ml-[258px] h-[23px] w-[17px] bg-linear-to-r from-black via-[#1a1b1d] to-[#1e1f21]" />
              <T w={148} c="ml-[633px] -mt-[2px]">Fecha de cierre real</T>
              <div className="ml-[75px] pt-px">
                <Lock />
              </div>
              <Dotted c="ml-[11px] mt-[9px] w-[340px]" />
            </div>
            <div className="flex h-[30px] items-center bg-[#1c1d1f] text-[#cbc8bf]">
              <T w={56} c="ml-[29px] text-[17.5px]">Abierta</T>
              <T w={258} c="ml-auto pt-[2px] text-[15px]">Debe proporcionar un valor para Tema.</T>
              <div className="ml-[13px] mr-[21px] -mt-[2px]">
                <SaveSolid />
              </div>
            </div>
            <div className="h-px bg-black" />
            <div className="flex h-[2px]">
              <div className="ml-[22px] w-[430px] bg-[#6b6b6b]" />
              <div className="ml-[188px] w-[56px] bg-[#38393a]" />
            </div>
          </div>
          <div className="w-[32px]">
            <div className="h-[69px] bg-[#1f281a]" />
          </div>
        </div>
      </div>
      <Recorder />
    </div>
  );
}
